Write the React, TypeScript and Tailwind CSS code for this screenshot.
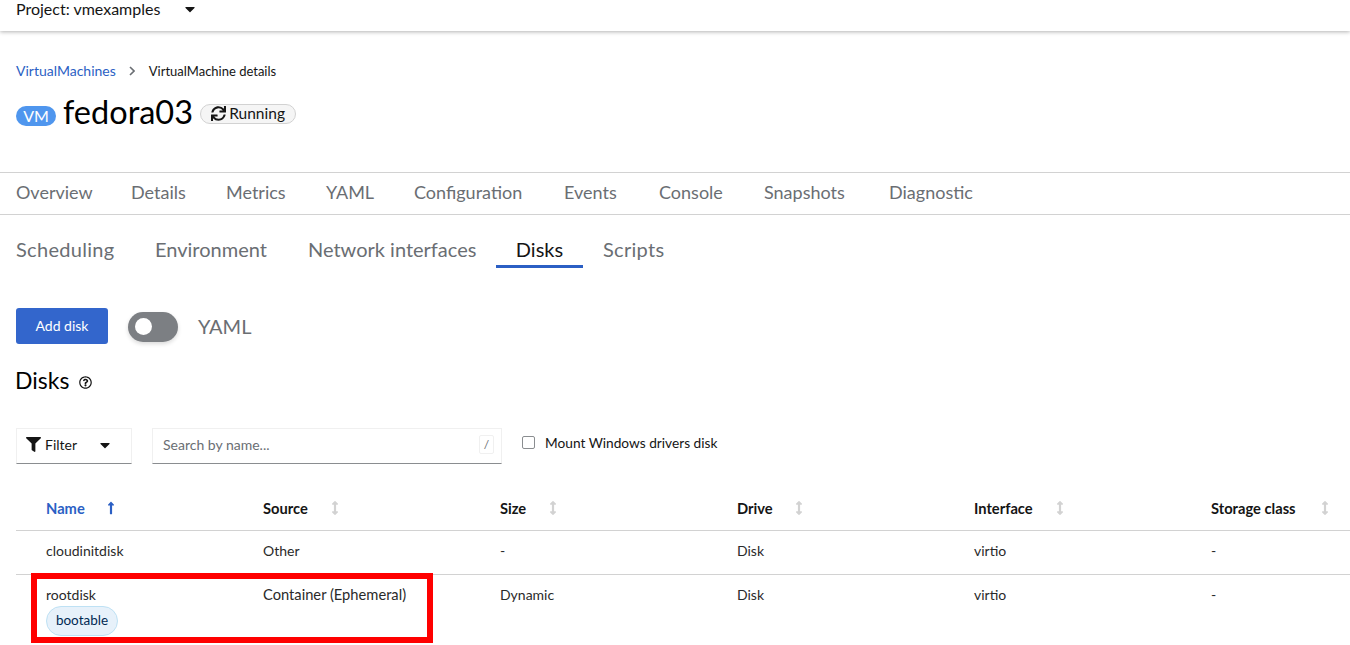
import React from "react";
import { FaSync, FaFilter, FaRegQuestionCircle, FaCaretDown, FaArrowsAltV, FaLongArrowAltUp } from "react-icons/fa";

const font = "font-['Lato','Noto_Sans',sans-serif]";

function SortIcon({ active = false }: { active?: boolean }) {
  if (active) return <FaLongArrowAltUp size={14} className="text-[#2b5fc4]" />;
  return <FaArrowsAltV size={14} className="text-[#d2d2d2]" />;
}

const mainTabs = [
  ["Overview", "w-[115px]"],
  ["Details", "w-[95px]"],
  ["Metrics", "w-[100px]"],
  ["YAML", "w-[88px]"],
  ["Configuration", "w-[150px]"],
  ["Events", "w-[95px]"],
  ["Console", "w-[105px]"],
  ["Snapshots", "w-[125px]"],
  ["Diagnostic", "w-[110px]"],
];

const cols = [
  { name: "Source", gap: "ml-[20px]" },
  { name: "Size", gap: "ml-[20px]" },
  { name: "Drive", gap: "ml-[19px]" },
  { name: "Interface", gap: "ml-[20px]" },
  { name: "Storage class", gap: "ml-[22px]" },
];

function Row({ cells, tall = false }: { cells: React.ReactNode[]; tall?: boolean }) {
  return (
    <div className={`grid grid-cols-[247px_237px_237px_237px_237px_1fr] ${tall ? "h-[70px]" : "h-[44px] border-b border-[#d2d2d2]"} text-[14px] leading-[21px] text-[#2a2a2a] pt-[9px]`}>
      {cells.map((c, i) => (
        <div key={i} className={i === 0 ? "pl-[30px]" : ""}>
          {c}
        </div>
      ))}
    </div>
  );
}

export default function App() {
  return (
    <div className={`${font} relative w-[1350px] h-[645px] overflow-hidden bg-white text-[#151515]`}>
      <header className="h-[31px] flex items-center pl-[16px] shadow-[0_1px_4px_rgba(0,0,0,0.3)] pb-[13px]">
        <span className="text-[16px] leading-[20px]">Project: vmexamples</span>
        <FaCaretDown size={16} className="ml-[22px] text-[#151515]" />
      </header>

      <nav className="flex items-center mt-[31px] pl-[16px] text-[13px] h-[20px]">
        <span className="text-[#2b5fc4] text-[14px] mb-[3px]">VirtualMachines</span>
        <svg width="6" height="10" viewBox="0 0 6 10" className="ml-[13px] mr-[14px] mb-[2px]">
          <path d="M1 1 L5 5 L1 9" stroke="#6a6e73" strokeWidth="1.6" fill="none" />
        </svg>
        <span>VirtualMachine details</span>
      </nav>

      <div className="flex items-center mt-[10px] pl-[16px] h-[40px]">
        <span className="mt-[8px] bg-[#4f96ee] text-white rounded-full h-[20px] w-[40px] flex items-center justify-center text-[16px]">VM</span>
        <span className="ml-[7px] text-[32.5px] leading-[40px] text-black">fedora03</span>
        <span className="ml-[7px] mt-[4px] h-[20px] w-[96px] rounded-full border border-[#d2d2d2] bg-[#f5f5f5] flex items-center justify-center gap-[3px] text-[15.5px] pb-[1px]">
          <FaSync size={15} />
          Running
        </span>
      </div>

      <div className="mt-[40px] h-[43px] border-y border-[#d2d2d2] flex items-center pl-[16px] pb-[2px] text-[18px] text-[#6a6e73]">
        {mainTabs.map(([t, w]) => (
          <span key={t} className={w}>{t}</span>
        ))}
      </div>

      <div className="h-[53px] flex pl-[16px] text-[20px] text-[#6a6e73]">
        <span className="w-[139px] pt-[19px] tracking-[0.3px]">Scheduling</span>
        <span className="w-[153px] pt-[19px]">Environment</span>
        <span className="w-[188px] pt-[19px]">Network interfaces</span>
        <span className="w-[87px] pt-[19px] text-center text-[#151515] border-b-[3px] border-[#2b5fc4]">Disks</span>
        <span className="ml-[20px] pt-[19px] tracking-[0.3px]">Scripts</span>
      </div>

      <div className="flex items-center mt-[40px] pl-[16px]">
        <button className="h-[36px] w-[92px] pb-[2px] rounded-[3px] bg-[#3366cc] text-white text-[14px]">Add disk</button>
        <div className="ml-[20px] mt-[1px] w-[50px] h-[30px] rounded-full bg-[#7c7f83] flex items-center pl-[7px] shadow-[0_2px_4px_rgba(0,0,0,0.15)]">
          <div className="w-[17px] h-[17px] rounded-full bg-white" />
        </div>
        <span className="ml-[20px] text-[20px] text-[#6a6e73]">YAML</span>
      </div>

      <div className="flex items-center mt-[20px] pl-[15px] h-[32px]">
        <span className="text-[23px] text-black">Disks</span>
        <FaRegQuestionCircle size={13} className="ml-[10px] mt-[5px] text-[#151515]" />
      </div>

      <div className="flex items-center mt-[32px] pl-[16px] h-[36px]">
        <div className="h-[36px] w-[116px] pb-[3px] border border-[#f0f0f0] border-b-[#8a8d90] flex items-center pl-[9px] text-[14px]">
          <FaFilter size={15} className="text-[#151515]" />
          <span className="ml-[4px]">Filter</span>
          <FaCaretDown size={16} className="ml-[20px] text-[#151515]" />
        </div>
        <div className="ml-[20px] h-[36px] w-[350px] pb-[3px] border border-[#f0f0f0] border-b-[#8a8d90] flex items-center pl-[10px] pr-[7px] text-[14px] text-[#6a6e73]">
          <span className="flex-1">Search by name...</span>
          <span className="w-[15px] h-[19px] border border-[#f0f0f0] rounded-[2px] flex items-center justify-center text-[12px]">/</span>
        </div>
        <div className="ml-[20px] flex items-center mb-[6px]">
          <span className="w-[13px] h-[13px] rounded-[2px] border border-[#8a8d90] bg-white" />
          <span className="ml-[10px] text-[13.7px]">Mount Windows drivers disk</span>
        </div>
      </div>

      <div className="ml-[16px] mt-[24px]">
        <div className="grid grid-cols-[247px_237px_237px_237px_237px_1fr] h-[43px] pb-[1px] border-b border-[#d2d2d2] text-[14.7px] font-bold items-center">
          <div className="pl-[30px] flex items-center text-[#2b5fc4]">
            <span>Name</span>
            <span className="ml-[19px] flex"><SortIcon active /></span>
          </div>
          {cols.map((c) => (
            <div key={c.name} className="flex items-center">
              <span>{c.name}</span>
              <span className={`${c.gap} flex`}><SortIcon /></span>
            </div>
          ))}
        </div>
        <Row cells={["cloudinitdisk", "Other", "-", "Disk", "virtio", "-"]} />
        <Row
          tall
          cells={[
            <div key="a">
              <div>rootdisk</div>
              <span className="mt-[1px] pb-[2px] inline-flex items-center justify-center h-[30px] w-[72px] rounded-full bg-[#e7f1fa] border border-[#bee1f4] text-[#002952] text-[13.5px]">bootable</span>
            </div>,
            <span key="b" className="text-[14.7px]">Container (Ephemeral)</span>,
            "Dynamic",
            "Disk",
            "virtio",
            "-",
          ]}
        />
      </div>

      <div className="absolute left-[31px] top-[573px] w-[402px] h-[70px] border-[6px] border-[#ff0000]" />
    </div>
  );
}
